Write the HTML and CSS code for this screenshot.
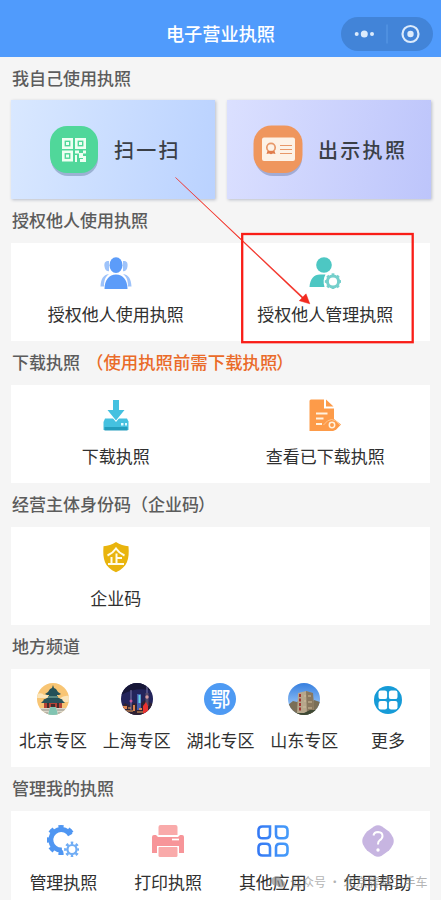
FILE: index.html
```html
<!DOCTYPE html>
<html lang="zh-CN">
<head>
<meta charset="utf-8">
<title>电子营业执照</title>
<link rel="stylesheet" href="styles.css">
</head>
<body>
<div class="screen">
  <header class="navbar">
    <h1>电子营业执照</h1>
    <div class="capsule">
      <svg width="92" height="34" viewBox="0 0 92 34"><g fill="#dcebfc"><circle cx="15.7" cy="17" r="2"/><circle cx="23.3" cy="17" r="3.5"/><circle cx="31" cy="17" r="2"/><circle cx="69.500" cy="17" r="3.200"/></g><circle cx="69.500" cy="17" r="8" fill="none" stroke="#dcebfc" stroke-width="2.200"/><path d="M46 7.500v19" stroke="#5b9be8"/></svg>
    </div>
  </header>

  <h2 class="first">我自己使用执照</h2>
  <div class="heroes">
    <div class="hero scan">
      <svg width="52" height="54" viewBox="0 0 52 54">
        <rect x="3" y="5" width="47" height="47" rx="17" fill="#8fa6c8" opacity=".8"/>
        <rect x="2" y="2" width="48" height="47" rx="17" fill="#50d79a"/>
        <g fill="none" stroke="#effff2" stroke-width="2.600"><rect x="15.300" y="15.300" width="8.400" height="8.400"/><rect x="28.300" y="15.300" width="8.400" height="8.400"/><rect x="15.300" y="27.800" width="8.400" height="8.400"/></g>
        <g fill="#effff2"><rect x="18" y="18" width="3" height="3"/><rect x="31" y="18" width="3" height="3"/><rect x="18" y="30.500" width="3" height="3"/><path d="M27 26.500h4v3h-4zM35 26.500h3v3h-3zM31 29h4v5h-4zM27 31h2v7h-2zM35 32h3v6h-6v-3h3z"/></g>
      </svg>
      <span>扫一扫</span>
    </div>
    <div class="hero show">
      <svg width="52" height="54" viewBox="0 0 52 54">
        <rect x="3" y="5" width="47" height="47" rx="18" fill="#96a0cb" opacity=".8"/>
        <rect x="1.500" y="1.500" width="49" height="47.500" rx="18" fill="#ef965d"/>
        <rect x="10" y="13.500" width="33" height="23.500" rx="2" fill="#fdf2e6"/>
        <g fill="none" stroke="#e89868"><circle cx="19" cy="23.500" r="4.200" stroke-width="1.700"/><path d="M28 21.500h12M28 25.500h12M28 29.500h12"/></g>
        <path d="M15.500 27l-1 3 2.500-.5 2 .8 2-.8 2.500.5-1-3z" fill="#e07d4c"/>
      </svg>
      <span>出示执照</span>
    </div>
  </div>

  <h2>授权他人使用执照</h2>
  <div class="card">
    <div class="item">
      <svg class="icon" viewBox="0 0 32 32">
        <g fill="#9ec3fa"><path d="M9 4C5 3.500 4 6 4.500 9.500c.3 3 2 5 4.500 4.800zM23 4c4-.5 5 2 4.500 5.500-.3 3-2 5-4.500 4.800zM9 17c-6 1-8 5-8.500 12.500H4C4 24 5 20 9 17zM23 17c6 1 8 5 8.500 12.500H28c0-5.500-1-9.500-5-12.500z"/></g>
        <ellipse cx="16" cy="8.200" rx="6.500" ry="7.900" fill="#5c9cf9"/><path d="M4.500 32C4.500 23 9 17.500 16 17.500S27.500 23 27.500 32z" fill="#5c9cf9"/>
      </svg>
      <span>授权他人使用执照</span>
    </div>
    <div class="item">
      <svg class="icon" viewBox="0 0 32 32">
        <circle cx="15" cy="8" r="7.800" fill="#4dc7c3"/><path d="M.5 30C1 22 5 17.500 11 17.500h5.500C14.500 21 14 25 15.500 30z" fill="#4dc7c3"/>
        <g fill="none" stroke="#74cfcb"><circle cx="24" cy="24.500" r="5.600" stroke-width="3"/><circle cx="24" cy="24.500" r="7" stroke-width="2.400" pathLength="32" stroke-dasharray="2 2" stroke-dashoffset="1"/></g>
      </svg>
      <span>授权他人管理执照</span>
    </div>
  </div>

  <h2>下载执照<em>（使用执照前需下载执照<i class="close">）</i></em></h2>
  <div class="card">
    <div class="item">
      <svg class="icon" viewBox="0 0 32 32">
        <path d="M5 19.500h22l1.500 3V31H3.500v-8z" fill="#45c1e0"/><path d="M4.500 28h23v3.500h-23z" fill="#249dbd"/>
        <path d="M13 1h6v10h5.500L16 21.500 7.500 11H13z" fill="#45c1e0" stroke="#fff" stroke-width="2" paint-order="stroke"/><path d="M21 24h2.500v2.500H21zM25 24h2v2.500h-2z" fill="#dffaff"/>
      </svg>
      <span>下载执照</span>
    </div>
    <div class="item">
      <svg class="icon" viewBox="0 0 32 32">
        <path d="M2 .5h13v9h10V20l7 5.500-5 5.200-4 1.800H.5V2Q.5.500 2 .5zM17 .5l7.500 7H17z" fill="#fd9b49"/>
        <path d="M7 14.500h11.500M7 19.500h7.500M7 25h6" fill="none" stroke="#fff2df" stroke-width="1.900"/><path d="M14.500 26q8-11 16.500 0" fill="none" stroke="#ffc58f"/><circle cx="23" cy="26" r="2.700" fill="none" stroke="#fff2df" stroke-width="1.500"/>
      </svg>
      <span>查看已下载执照</span>
    </div>
  </div>

  <h2>经营主体身份码（企业码<i class="close">）</i></h2>
  <div class="card">
    <div class="item">
      <svg class="icon" viewBox="0 0 32 32">
        <path d="M16 1c4 2.800 8 4 12.500 4.200 1 13-1 20.800-12.500 26C4.500 26 2.500 18.200 3.500 5.200 8 5 12 3.800 16 1z" fill="#e9b40d"/>
        <path d="M7.500 14.500Q13 12 16 7.500q3 4.500 8.500 7M16.500 12.500V23M16.500 17h5.500M11.500 16v7M8 23h16" fill="none" stroke="#fffce9" stroke-width="2"/>
      </svg>
      <span>企业码</span>
    </div>
    <div class="item"></div>
  </div>

  <h2>地方频道</h2>
  <div class="card">
    <div class="item">
      <svg class="icon" viewBox="0 0 32 32"><clipPath id="disc"><circle cx="16" cy="16" r="16"/></clipPath>
        <g clip-path="url(#disc)"><path fill="#f8c574" d="M0 0h32v32H0z"/><path d="M0 11q5-2 7 1 5-1 5 3H0zM22 16q5-4 10-3v6H22z" fill="#fbe5ba"/>
        <path d="M16 2l1 3 2 1 2 3 3 2-2 1h-2v2l6 3-2 1H8l-2-1 6-3v-2h-2l-2-1 3-2 2-3 2-1z" fill="#245158"/><path d="M11 13h10v2H11zM8 18h16v2H8z" fill="#5b8982"/><path d="M8 16h16l4 4H4z" fill="#28525a"/>
        <path d="M7 20h18v5H7z" fill="#b54337"/><path d="M10 20h2v5h-2zM20 20h2v5h-2zM14 21h4v4h-4z" fill="#432e2d"/><path d="M0 25h32v7H0z" fill="#dbd8cb"/><path d="M13 24h6l2 8H11z" fill="#81c4b2"/><path d="M4 27h8M20 27h8M3 30h8M21 30h8" stroke="#948f86"/></g></svg>
      <span>北京专区</span>
    </div>
    <div class="item">
      <svg class="icon" viewBox="0 0 32 32"><g clip-path="url(#disc)"><path fill="#23245b" d="M0 0h32v32H0z"/><path d="M0 0h32v8Q16 3 0 12z" fill="#171738"/>
        <path d="M0 25l4-5 5 3 4-3 5 2 6-5 8 4v11H0z" fill="#302232"/><path d="M10 7v20M26 3v12" stroke="#807aad"/><path d="M16 11h4v16h-4z" fill="#435fae"/><path d="M17.500 12h2v8h-2z" fill="#65d5e6"/><path d="M24.500 10h3v13h-3z" fill="#594c6b"/><circle cx="10" cy="18" r="1.500" fill="#cc5b9a"/><circle cx="26" cy="14" r="1.700" fill="#d59aa0"/>
        <path d="M22 23l3-4 2 4v9h-5z" fill="#e93330"/><path d="M2 23h4v3H2zM12 22h2v6h-2zM18 25h3v2h-3z" fill="#dc8450"/><path d="M3 28h9M16 29h6M7 25h3" stroke="#f0a55d"/></g></svg>
      <span>上海专区</span>
    </div>
    <div class="item">
      <div class="badge">鄂</div>
      <span>湖北专区</span>
    </div>
    <div class="item">
      <svg class="icon" viewBox="0 0 32 32"><defs><linearGradient id="sky" x2="0" y2="1"><stop stop-color="#367fdf"/><stop offset="1" stop-color="#b9dcff"/></linearGradient></defs><g clip-path="url(#disc)"><path fill="url(#sky)" d="M0 0h32v32H0z"/><path d="M0 22l5-4 4 1 4-3 9 7 4-6 6 2v13H0z" fill="#7a6f58"/>
        <path d="M10 10l8-2 6 2 2 12-1 9H9z" fill="#b7a78c"/><path d="M18 8l7 2 1 12-1 10-6-1z" fill="#89785f"/><path d="M12 11v18" stroke="#a33533" stroke-width="2" stroke-dasharray="3 1.500"/><path d="M16 13h2M20 13h3M16 18h2M20 19h4M15 24h3M20 25h4" stroke="#d0bd9c"/><path d="M0 30q5-3 9 0l7 0 6-3 10 0v5H0z" fill="#3e4935"/></g></svg>
      <span>山东专区</span>
    </div>
    <div class="item">
      <svg class="icon" viewBox="0 0 32 32"><circle cx="16" cy="17" r="14" fill="#169bd7"/><g fill="#fff"><rect x="6.500" y="7.500" width="8.600" height="8.600" rx="2.200"/><rect x="16.900" y="7.500" width="8.600" height="8.600" rx="2.200"/><rect x="6.500" y="17.900" width="8.600" height="8.600" rx="2.200"/><rect x="16.900" y="17.900" width="8.600" height="8.600" rx="2.200"/></g></svg>
      <span>更多</span>
    </div>
  </div>

  <h2>管理我的执照</h2>
  <div class="card last">
    <div class="item">
      <svg class="icon" viewBox="0 0 32 32"><g fill="none" stroke="#4f96f2"><path d="M23.300 10A10.300 10.300 0 1 0 15 25" stroke-width="5"/><circle cx="14" cy="15" r="12.700" stroke-width="4.500" pathLength="32" stroke-dasharray="2 2" stroke-dashoffset="1" clip-path="url(#gearcut)"/></g><clipPath id="gearcut"><path d="M-1-1h29v13H17v19H-1z"/></clipPath>
        <g fill="none" stroke="#70adf5"><circle cx="25" cy="24.500" r="4.500" stroke-width="2.200"/><circle cx="25" cy="24.500" r="6.500" stroke-width="2.800" pathLength="32" stroke-dasharray="2 2" stroke-dashoffset="1"/></g></svg>
      <span>管理执照</span>
    </div>
    <div class="item">
      <svg class="icon" viewBox="0 0 32 32"><path d="M6.500 10V2q0-2 2-2h15q2 0 2 2v8z" fill="#f9aaaa"/><path d="M2 10h2l2 2h20l2-2h2q2 0 2 2v16h-5v-7H5v7H0V12q0-2 2-2z" fill="#f79599"/><path d="M20 14.500h7" stroke="#fff" stroke-width="1.700"/><rect x="6.500" y="21.500" width="19" height="10.500" rx="1.500" fill="#f9aaaa"/><path d="M5 21.500h22" stroke="#fff"/></svg>
      <span>打印执照</span>
    </div>
    <div class="item">
      <svg class="icon" viewBox="0 0 32 32"><defs><linearGradient id="blue"><stop stop-color="#3579f4"/><stop offset="1" stop-color="#459bfa"/></linearGradient></defs><g fill="#fff" stroke="url(#blue)" stroke-width="2.600"><path d="M5.500 1.500H13v7.800q0 4-4 4H5.500q-4 0-4-4V5.500q0-4 4-4zM19 1.500h7.500q4 0 4 4v3.800q0 4-4 4H23q-4 0-4-4zM5.500 18.700H9q4 0 4 4v7.800H5.500q-4 0-4-4v-3.800q0-4 4-4zM23 18.700h3.500q4 0 4 4v3.800q0 4-4 4H19v-7.800q0-4 4-4z"/></g></svg>
      <span>其他应用</span>
    </div>
    <div class="item">
      <svg class="icon" viewBox="0 0 32 32"><path d="M12 1.500q4-2.500 8 0l7 5q2 2 4 6 1.500 3.500 0 7-2 4-4 6l-7 5q-4 2.500-8 0l-7-5q-2-2-4-6-1.500-3.500 0-7 2-4 4-6z" fill="#c7b5e1"/><path d="M11.500 10.500Q12 7 16 7q4.500.2 4.500 4 0 2.500-3 4.500-1.500 1-1.500 4" fill="none" stroke="#fff" stroke-width="2"/><circle cx="16" cy="25" r="1.700" fill="#fff"/></svg>
      <span>使用帮助</span>
    </div>
  </div>

  <div class="watermark">
    <svg width="14" height="12" viewBox="0 0 14 12"><ellipse cx="5.500" cy="5" rx="5.500" ry="4.500"/><ellipse cx="10" cy="8" rx="4" ry="3.500"/></svg>
    <span>公众号 · 北京牌照二手车</span>
  </div>
  <svg class="annotation" width="441" height="900" viewBox="0 0 441 900"><rect x="242.200" y="234" width="170.500" height="108.200" fill="none" stroke="#f91d17" stroke-width="2.300"/><path d="M175.500 177.500L302.800 297 306 293.800 309.800 303.800 299.300 300.700 302 298z" fill="#f22b20" stroke="#f22b20" stroke-width=".5"/></svg>
</div>
</body>
</html>
```
FILE: styles.css
```css
* {
  box-sizing: border-box;
}

body {
  margin: 0;
  background: #f5f5f5;
  color: #303030;
  font-family: "Noto Sans CJK SC", sans-serif;
}

.screen {
  position: relative;
  width: 441px;
  height: 900px;
  overflow: hidden;
}

.navbar {
  position: relative;
  display: flex;
  justify-content: center;
  height: 57px;
  padding-top: 12px;
  background: #509bfc;
}

h1 {
  margin: 0;
  color: #fff;
  font-size: 18.2px;
  font-weight: 500;
  line-height: 43px;
}

.capsule {
  position: absolute;
  top: 17px;
  right: 8px;
  width: 92px;
  height: 34px;
  border-radius: 17px;
  background: #4284d8;
}

svg {
  display: block;
  flex: none;
}

h2 {
  height: 44px;
  margin: 0;
  padding-left: 12px;
  color: #5c5c5c;
  font-size: 17px;
  font-weight: 500;
  line-height: 42px;
  white-space: nowrap;
}

h2.first {
  height: 43px;
}

h2 em {
  margin-left: 6px;
  color: #ea6b29;
  font-size: 17.4px;
  font-style: normal;
}

h2 i {
  font-style: normal;
}

.close {
  margin-left: -1px;
}

.heroes {
  display: flex;
  gap: 12px;
  height: 99px;
  padding: 0 10px 0 11px;
}

.hero {
  display: flex;
  flex: none;
  align-items: center;
  width: 204px;
  box-shadow: 1px 1px 3px #b9bdc8;
  color: #3a3f46;
  font-size: 20px;
  font-weight: 500;
  letter-spacing: 2.3px;
}

.scan {
  padding-left: 37px;
  background: linear-gradient(100deg, #d9e8ff, #bad2ff);
}

.show {
  padding-left: 25px;
  background: linear-gradient(100deg, #dbe0ff, #bdc5fb);
}

.hero span {
  margin-left: 14px;
}

.hero svg {
  margin-top: 3px;
}

.card {
  display: flex;
  height: 98px;
  margin: 0 11px;
  background: #fff;
}

.item {
  display: flex;
  flex: 1;
  flex-direction: column;
  align-items: center;
  padding-top: 14px;
  font-size: 17px;
  line-height: 24px;
  white-space: nowrap;
}

.item span {
  margin-top: 13px;
}

.icon,
.badge {
  width: 32px;
  height: 32px;
}

.badge {
  border-radius: 50%;
  background: #4e9af3;
  color: #fff;
  font-size: 20px;
  font-weight: 500;
  line-height: 31px;
  text-align: center;
}

.watermark {
  position: absolute;
  top: 873px;
  left: 271px;
  display: flex;
  align-items: center;
  gap: 5px;
  color: #8b8b8b;
  fill: #8b8b8b;
  font-size: 12px;
  line-height: 18px;
  white-space: nowrap;
  opacity: .65;
}

.annotation {
  position: absolute;
  top: 0;
  left: 0;
  pointer-events: none;
}
```
